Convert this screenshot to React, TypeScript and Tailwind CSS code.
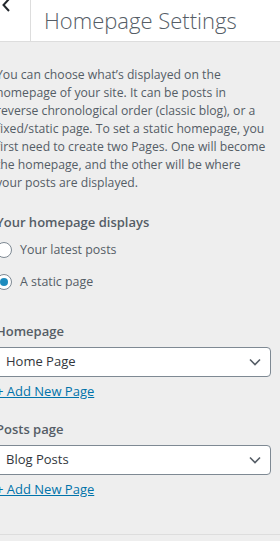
import React from "react";

const font = { fontFamily: '"Open Sans", "Noto Sans", sans-serif' };

const Radio = ({ checked, label }: { checked?: boolean; label: string }) => (
  <label className="flex items-center gap-[8px] h-[20px]">
    <span className="w-[16px] h-[16px] rounded-full border border-[#7e8993] bg-white flex items-center justify-center shrink-0">
      {checked && <span className="w-[8px] h-[8px] rounded-full bg-[#1e8cbe]" />}
    </span>
    <span className="text-[12.4px] text-[#555d66]">{label}</span>
  </label>
);

const Select = ({ value }: { value: string }) => (
  <div className="h-[30px] w-[275px] border border-[#7e8993] rounded-[4px] bg-white flex items-center justify-between pl-[9px] pr-[9px]">
    <span className="text-[13px] text-[#32373c]">{value}</span>
    <svg width="12" height="8" viewBox="0 0 12 8" fill="none">
      <path d="M1 1.5l5 5 5-5" stroke="#555d66" strokeWidth="1.6" />
    </svg>
  </div>
);

const PageControl = ({ title, value }: { title: string; value: string }) => (
  <div className="flex flex-col">
    <div className="text-[13px] font-semibold text-[#555d66] leading-[20px]">{title}</div>
    <div className="mt-[6px]">
      <Select value={value} />
    </div>
    <a className="mt-[4px] text-[13px] text-[#0073aa] underline leading-[20px]">+ Add New Page</a>
  </div>
);

export default function App() {
  return (
    <div className="w-[280px] h-[541px] bg-[#eeeeee] overflow-hidden" style={font}>
      <div className="h-[42px] bg-white border-b border-[#dddddd] flex">
        <div className="w-[31px] border-r border-[#dddddd] relative shrink-0">
          <svg className="absolute left-[1px] -top-[2px]" width="10" height="14" viewBox="0 0 10 14" fill="none">
            <path d="M8 1L2.5 7 8 13" stroke="#23282d" strokeWidth="2" />
          </svg>
        </div>
        <div className="pl-[13px] flex items-center text-[22px] font-light text-[#555d66]">Homepage Settings</div>
      </div>
      <div className="-ml-[4px] pr-[8px] pt-[24px] pb-[35px] border-b border-[#dddddd]">
        <p className="w-[273px] text-[12.2px] leading-[18px] text-[#555d66]">
          You can choose what’s displayed on the homepage of your site. It can be posts in reverse chronological order (classic blog), or a fixed/static page. To set a static homepage, you first need to create two Pages. One will become the homepage, and the other will be where your posts are displayed.
        </p>
        <div className="mt-[20px] text-[13px] font-semibold text-[#555d66] leading-[20px]">Your homepage displays</div>
        <div className="mt-[8px] flex flex-col gap-[12px]">
          <Radio label="Your latest posts" />
          <Radio checked label="A static page" />
        </div>
        <div className="mt-[29px] flex flex-col gap-[18px]">
          <PageControl title="Homepage" value="Home Page" />
          <PageControl title="Posts page" value="Blog Posts" />
        </div>
      </div>
    </div>
  );
}
